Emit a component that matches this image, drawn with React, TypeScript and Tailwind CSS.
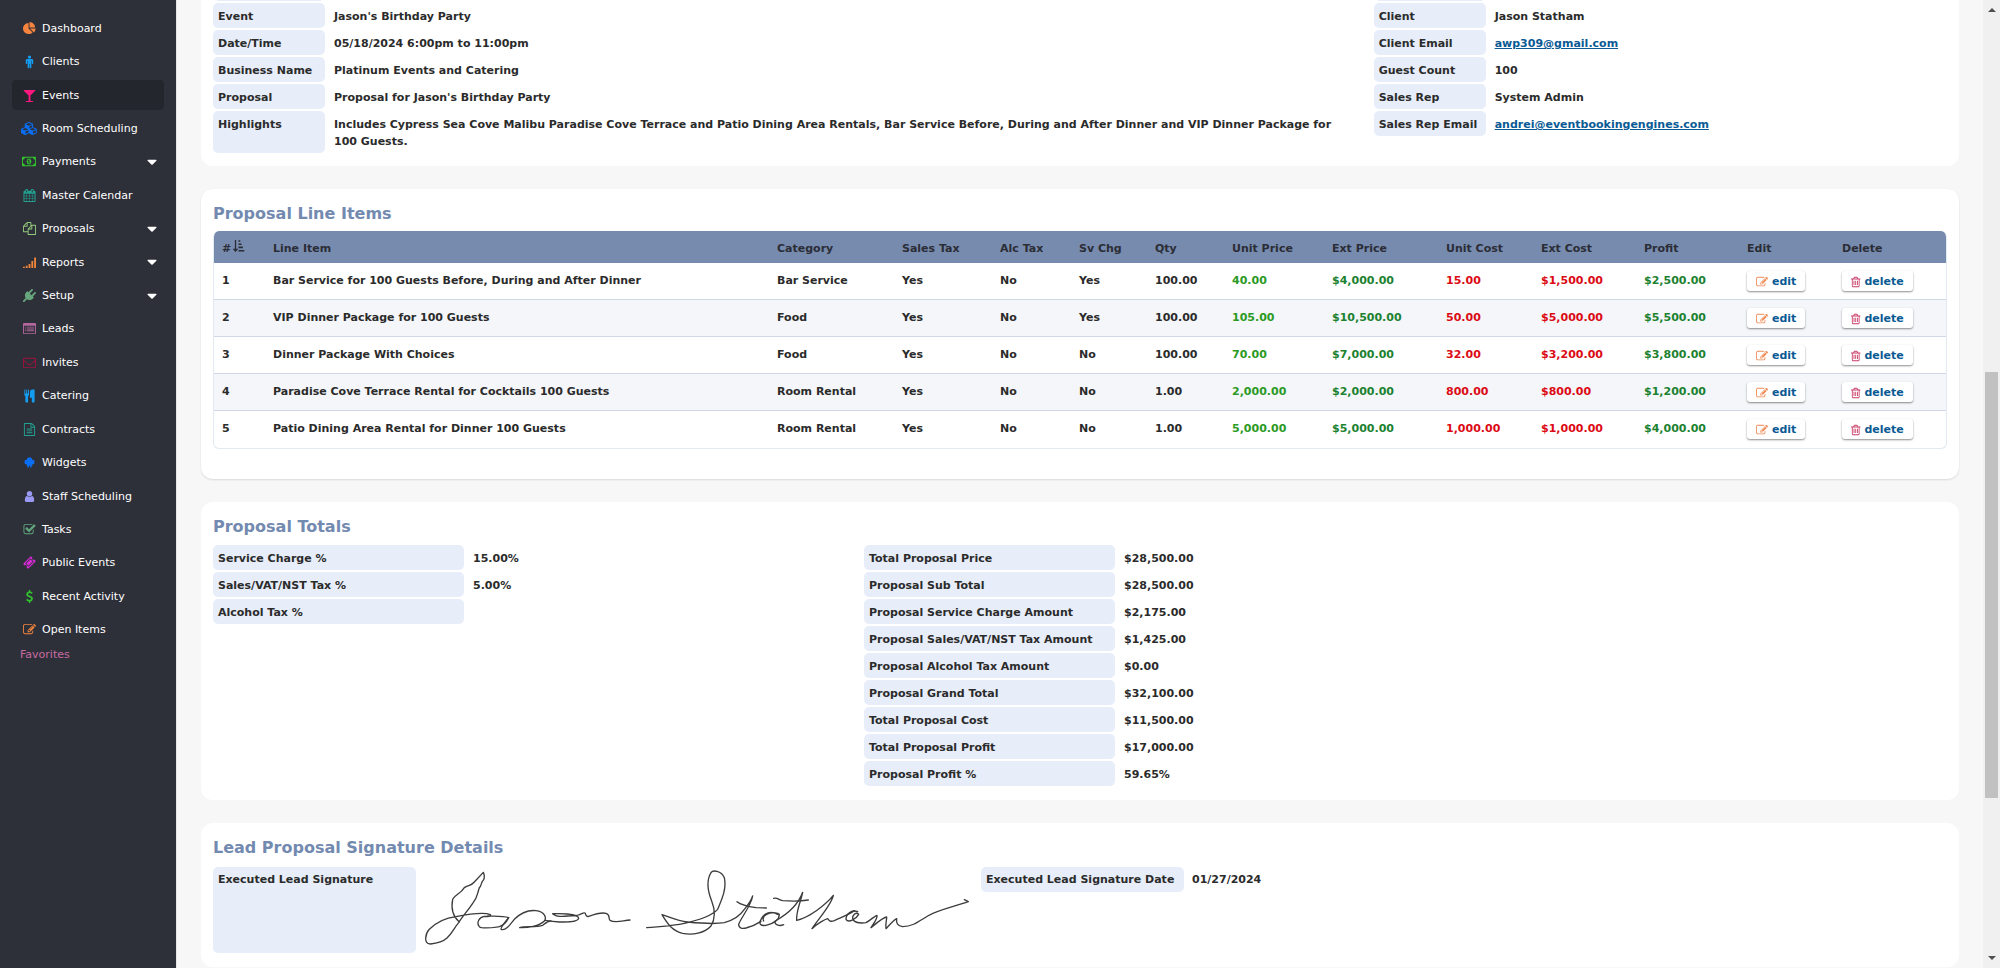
import type { ReactNode } from 'react';

const ICONS = {
  pie: 'M768 890l546 546q-106 108-247.5 168t-298.5 60q-209 0-385.5-103t-279.5-279.5-103-385.5 103-385.5 279.5-279.5 385.5-103v762zm187 6h773q0 157-60 298.5t-168 247.5zm709-128h-768v-768q209 0 385.5 103t279.5 279.5 103 385.5z',
  male: 'M1408 736v416q0 40-28 68t-68 28-68-28-28-68v-352h-64v912q0 46-33 79t-79 33-79-33-33-79v-464h-64v464q0 46-33 79t-79 33-79-33-33-79v-912h-64v352q0 40-28 68t-68 28-68-28-28-68v-416q0-80 56-136t136-56h640q80 0 136 56t56 136zm-288-448q0 93-65.5 158.5t-158.5 65.5-158.5-65.5-65.5-158.5 65.5-158.5 158.5-65.5 158.5 65.5 65.5 158.5z',
  glass: 'M1699 186q0 35-43 78l-632 632v768h320q26 0 45 19t19 45-19 45-45 19h-896q-26 0-45-19t-19-45 19-45 45-19h320v-768l-632-632q-43-43-43-78 0-23 18-36.5t38-17.5 43-4h1408q23 0 43 4t38 17.5 18 36.5z',
  cubes: 'M640 1632l384-192v-314l-384 164v342zm-64-454l404-173-404-173-404 173zm1088 454l384-192v-314l-384 164v342zm-64-454l404-173-404-173-404 173zm-448-293l384-165v-266l-384 164v267zm-64-379l441-189-441-189-441 189zm1088 518v416q0 36-19 67t-52 47l-448 224q-25 14-57 14t-57-14l-448-224q-4-2-7-4-2 2-7 4l-448 224q-25 14-57 14t-57-14l-448-224q-33-16-52-47t-19-67v-416q0-38 21.5-70t56.5-48l434-186v-400q0-38 21.5-70t56.5-48l448-192q23-10 50-10t50 10l448 192q35 16 56.5 48t21.5 70v400l434 186q36 16 57 48t21 70z',
  money: 'M768 1152h384v-96h-128v-448h-114l-148 137 77 80q42-37 55-57h2v288h-128v96zm512-256q0 70-21 142t-59.5 134-101.5 101-138 39-138-39-101.5-101-59.5-134-21-142 21-142 59.5-134 101.5-101 138-39 138 39 101.5 101 59.5 134 21 142zm512 256v-512q-106 0-181-75t-75-181h-1152q0 106-75 181t-181 75v512q106 0 181 75t75 181h1152q0-106 75-181t181-75zm128-832v1152q0 26-19 45t-45 19h-1792q-26 0-45-19t-19-45v-1152q0-26 19-45t45-19h1792q26 0 45 19t19 45z',
  calendar: 'M192 1664h288v-288h-288v288zm352 0h320v-288h-320v288zm-352-352h288v-320h-288v320zm352 0h320v-320h-320v320zm-352-384h288v-288h-288v288zm736 736h320v-288h-320v288zm-384-736h320v-288h-320v288zm768 736h288v-288h-288v288zm-384-352h320v-320h-320v320zm-352-864v-288q0-13-9.5-22.5t-22.5-9.5h-64q-13 0-22.5 9.5t-9.5 22.5v288q0 13 9.5 22.5t22.5 9.5h64q13 0 22.5-9.5t9.5-22.5zm736 864h288v-320h-288v320zm-384-384h320v-288h-320v288zm384 0h288v-288h-288v288zm32-480v-288q0-13-9.5-22.5t-22.5-9.5h-64q-13 0-22.5 9.5t-9.5 22.5v288q0 13 9.5 22.5t22.5 9.5h64q13 0 22.5-9.5t9.5-22.5zm384-64v1280q0 52-38 90t-90 38h-1408q-52 0-90-38t-38-90v-1280q0-52 38-90t90-38h128v-96q0-66 47-113t113-47h64q66 0 113 47t47 113v96h384v-96q0-66 47-113t113-47h64q66 0 113 47t47 113v96h128q52 0 90 38t38 90z',
  files: 'M1696 384q40 0 68 28t28 68v1216q0 40-28 68t-68 28h-960q-40 0-68-28t-28-68v-288h-544q-40 0-68-28t-28-68v-672q0-40 20-88t48-76l408-408q28-28 76-48t88-20h416q40 0 68 28t28 68v328q68-40 128-40h416zm-544 213l-299 299h299v-299zm-640-384l-299 299h299v-299zm196 647l316-316v-416h-384v416q0 40-28 68t-68 28h-416v640h512v-256q0-40 20-88t48-76zm956 804v-1152h-384v416q0 40-28 68t-68 28h-416v640h896z',
  signal: 'M0 1472h256v192h-256zM384 1344h256v320h-256zM768 1088h256v576h-256zM1152 704h256v960h-256zM1536 192h256v1472h-256z',
  plug: 'M1755 453q37 38 37 90.5t-37 90.5l-401 400 150 150-160 160q-163 163-389.5 186.5t-411.5-100.5l-362 362h-181v-181l362-362q-124-185-100.5-411.5t186.5-389.5l160-160 150 150 400-401q38-37 91-37t90 37 37 90.5-37 90.5l-400 401 234 234 401-400q38-37 91-37t90 37z',
  list: 'M160 128h1472q66 0 113 47t47 113v1216q0 66-47 113t-113 47h-1472q-66 0-113-47t-47-113v-1216q0-66 47-113t113-47zM128 512v992q0 32 32 32h1472q32 0 32-32v-992zM256 640h128v128h-128zM512 640h1024v128h-1024zM256 896h128v128h-128zM512 896h1024v128h-1024zM256 1152h128v128h-128zM512 1152h1024v128h-1024z',
  envelope: 'M1664 1504v-768q-32 36-69 66-268 206-426 338-51 43-83 67t-86.5 48.5-102.5 24.5h-2q-48 0-102.5-24.5t-86.5-48.5-83-67q-158-132-426-338-37-30-69-66v768q0 13 9.5 22.5t22.5 9.5h1472q13 0 22.5-9.5t9.5-22.5zm0-1051v-24.5l-.5-13-3-12.5-5.5-9-9-7.5-14-2.5h-1472q-13 0-22.5 9.5t-9.5 22.5q0 168 147 284 193 152 401 317 6 5 35 29.5t46 37.5 44.5 31.5 50.5 27.5 43 9h2q20 0 43-9t50.5-27.5 44.5-31.5 46-37.5 35-29.5q208-165 401-317 54-43 100.5-115.5t46.5-131.5zm128-37v1088q0 66-47 113t-113 47h-1472q-66 0-113-47t-47-113v-1088q0-66 47-113t113-47h1472q66 0 113 47t47 113z',
  cutlery: 'M832 128v640q0 61-35.5 111t-92.5 70v779q0 52-38 90t-90 38h-128q-52 0-90-38t-38-90v-779q-57-20-92.5-70t-35.5-111v-640q0-26 19-45t45-19 45 19 19 45v416q0 26 19 45t45 19 45-19 19-45v-416q0-26 19-45t45-19 45 19 19 45v416q0 26 19 45t45 19 45-19 19-45v-416q0-26 19-45t45-19 45 19 19 45zm768 0v1600q0 52-38 90t-90 38h-128q-52 0-90-38t-38-90v-512h-224q-13 0-22.5-9.5t-9.5-22.5v-800q0-132 94-226t226-94h256q26 0 45 19t19 45z',
  file: 'M1596 380q28 28 48 76t20 88v1152q0 40-28 68t-68 28h-1344q-40 0-68-28t-28-68v-1600q0-40 28-68t68-28h896q40 0 88 20t76 48zm-444-244v376h376q-10-29-22-41l-313-313q-12-12-41-22zm384 1528v-1024h-416q-40 0-68-28t-28-68v-416h-768v1536h1280zm-1024-864q0-14 9-23t23-9h704q14 0 23 9t9 23v64q0 14-9 23t-23 9h-704q-14 0-23-9t-9-23v-64zm736 224q14 0 23 9t9 23v64q0 14-9 23t-23 9h-704q-14 0-23-9t-9-23v-64q0-14 9-23t23-9h704zm0 256q14 0 23 9t9 23v64q0 14-9 23t-23 9h-704q-14 0-23-9t-9-23v-64q0-14 9-23t23-9h704z',
  android: 'M480 560q40-330 416-380q376 50 416 380h120q120 0 140 110v340q-10 100-120 100h-140v130q0 90-90 90h-40v190q-10 90-100 90t-100-90v-190h-172v190q-10 90-100 90t-100-90v-190h-40q-90 0-90-90v-130h-140q-110 0-120-100v-340q20-110 140-110z',
  user: 'M1536 1399q0 109-62.5 187t-150.5 78h-854q-88 0-150.5-78t-62.5-187q0-85 8.5-160.5t31.5-152 58.5-131 94-89 134.5-34.5q131 128 313 128t313-128q76 0 134.5 34.5t94 89 58.5 131 31.5 152 8.5 160.5zm-256-887q0 159-112.5 271.5t-271.5 112.5-271.5-112.5-112.5-271.5 112.5-271.5 271.5-112.5 271.5 112.5 112.5 271.5z',
  check: 'M1472 930v318q0 119-84.5 203.5t-203.5 84.5h-832q-119 0-203.5-84.5t-84.5-203.5v-832q0-119 84.5-203.5t203.5-84.5h832q63 0 117 25 15 7 18 23 3 17-9 29l-49 49q-10 10-23 10-3 0-9-2-23-6-45-6h-832q-66 0-113 47t-47 113v832q0 66 47 113t113 47h832q66 0 113-47t47-113v-254q0-13 9-22l64-64q10-10 23-10 6 0 12 3 20 8 20 29zm231-489l-814 814q-24 24-57 24t-57-24l-430-430q-24-24-24-57t24-57l110-110q24-24 57-24t57 24l263 263 647-647q24-24 57-24t57 24l110 110q24 24 24 57t-24 57z',
  ticket: 'M1024 452l316 316-572 572-316-316zm-211 979l618-618q19-19 19-45t-19-45l-362-362q-18-18-45-18t-45 18l-618 618q-19 19-19 45t19 45l362 362q18 18 45 18t45-18zm889-637l-907 908q-37 37-90.5 37t-90.5-37l-126-126q56-56 56-136t-56-136-136-56-136 56l-125-126q-37-37-37-90.5t37-90.5l907-906q37-37 90.5-37t90.5 37l125 125q-56 56-56 136t56 136 136 56 136-56l126 125q37 37 37 90.5t-37 90.5z',
  dollar: 'M1362 1185q0 153-99.5 263.5t-258.5 136.5v175q0 14-9 23t-23 9h-135q-13 0-22.5-9.5t-9.5-22.5v-175q-66-9-127.5-31t-101.5-44.5-74-48-46.5-37.5-17.5-18q-17-21-2-41l103-135q7-10 23-12 15-2 24 9l2 2q113 99 243 125 37 8 74 8 81 0 142.5-43t61.5-122q0-28-15-53t-33.5-42-58.5-37.5-66-32-80-32.5q-39-16-61.5-25t-61.5-26.5-62.5-31-56.5-35.5-53.5-42.5-43.5-49-35.5-58-21-66.5-8.5-78q0-138 98-242t255-134v-180q0-13 9.5-22.5t22.5-9.5h135q14 0 23 9t9 23v176q57 6 110.5 23t87 33.5 63.5 37.5 39 29 15 14q17 18 5 38l-81 146q-8 15-23 16-14 3-27-7-3-3-14.5-12t-39-26.5-58.5-32-74.5-26-85.5-11.5q-95 0-155 43t-60 111q0 26 8.5 48t29.5 41.5 39.5 33 56 31 60.5 27 70 27.5q53 20 81 31.5t76 35 75.5 42.5 62 50 53 63.5 31.5 76.5 13 94z',
  edit: 'M888 1184l116-116-152-152-116 116v56h96v96h56zm440-720q-16-16-33 1l-350 350q-17 17-1 33t33-1l350-350q17-17 1-33zm80 594v190q0 119-84.5 203.5t-203.5 84.5h-832q-119 0-203.5-84.5t-84.5-203.5v-832q0-119 84.5-203.5t203.5-84.5h832q63 0 117 25 15 7 18 23 3 17-9 29l-49 49q-14 14-32 8-23-6-45-6h-832q-66 0-113 47t-47 113v832q0 66 47 113t113 47h832q66 0 113-47t47-113v-126q0-13 9-22l64-64q15-15 35-7t20 29zm-96-738l288 288-672 672h-288v-288zm444 132l-92 92-288-288 92-92q28-28 68-28t68 28l152 152q28 28 28 68t-28 68z',
  trash: 'M704 736v576q0 14-9 23t-23 9h-64q-14 0-23-9t-9-23v-576q0-14 9-23t23-9h64q14 0 23 9t9 23zm256 0v576q0 14-9 23t-23 9h-64q-14 0-23-9t-9-23v-576q0-14 9-23t23-9h64q14 0 23 9t9 23zm256 0v576q0 14-9 23t-23 9h-64q-14 0-23-9t-9-23v-576q0-14 9-23t23-9h64q14 0 23 9t9 23zm128 724v-948h-896v948q0 22 7 40.5t14.5 27 10.5 8.5h832q3 0 10.5-8.5t14.5-27 7-40.5zm-672-1076h448l-48-117q-7-9-17-11h-317q-10 2-17 11zm928 32v64q0 14-9 23t-23 9h-96v948q0 83-47 143.5t-113 60.5h-832q-66 0-113-58.5t-47-141.5v-952h-96q-14 0-23-9t-9-23v-64q0-14 9-23t23-9h309l70-167q15-37 54-63t79-26h320q40 0 79 26t54 63l70 167h309q14 0 23 9t9 23z',
  caret: 'M1408 704q0 26-19 45l-448 448q-19 19-45 19t-45-19l-448-448q-19-19-19-45t19-45 45-19h896q26 0 45 19t19 45z',
};

type IconName = keyof typeof ICONS;

const BOXES: Partial<Record<IconName, string>> = {
  cubes: '0 0 2304 1792',
  money: '0 0 1920 1792',
  trash: '192 0 1408 1792',
};

function Icon({ name, className }: { name: IconName; className: string }) {
  return (
    <svg viewBox={BOXES[name] ?? '0 0 1792 1792'} className={className} fill="currentColor" fillRule="evenodd" overflow="visible" aria-hidden="true">
      <path d={ICONS[name]} />
    </svg>
  );
}

type NavItem = { label: string; icon: IconName; color: string; active?: boolean; menu?: boolean };

const NAV: NavItem[] = [
  { label: 'Dashboard', icon: 'pie', color: 'text-[#f5843f]' },
  { label: 'Clients', icon: 'male', color: 'text-[#149df0]' },
  { label: 'Events', icon: 'glass', color: 'text-[#fb1680]', active: true },
  { label: 'Room Scheduling', icon: 'cubes', color: 'text-[#0a6ef5]' },
  { label: 'Payments', icon: 'money', color: 'text-[#30c32c]', menu: true },
  { label: 'Master Calendar', icon: 'calendar', color: 'text-[#22a292]' },
  { label: 'Proposals', icon: 'files', color: 'text-[#94c97c]', menu: true },
  { label: 'Reports', icon: 'signal', color: 'text-[#ee833c]', menu: true },
  { label: 'Setup', icon: 'plug', color: 'text-[#67a67c]', menu: true },
  { label: 'Leads', icon: 'list', color: 'text-[#b4669f]' },
  { label: 'Invites', icon: 'envelope', color: 'text-[#a0103c]' },
  { label: 'Catering', icon: 'cutlery', color: 'text-[#149df0]' },
  { label: 'Contracts', icon: 'file', color: 'text-[#22a292]' },
  { label: 'Widgets', icon: 'android', color: 'text-[#0a6ef5]' },
  { label: 'Staff Scheduling', icon: 'user', color: 'text-[#9a9af5]' },
  { label: 'Tasks', icon: 'check', color: 'text-[#5fa57c]' },
  { label: 'Public Events', icon: 'ticket', color: 'text-[#d42bd4]' },
  { label: 'Recent Activity', icon: 'dollar', color: 'text-[#30c32c]' },
  { label: 'Open Items', icon: 'edit', color: 'text-[#ee833c]' },
];

function Sidebar() {
  return (
    <aside className="w-44 shrink-0 bg-[#2e3039] px-3 pt-[11px] text-white">
      <nav>
        <ul className="grid h-[635px] auto-rows-fr">
          {NAV.map((item) => (
            <li key={item.label} className="flex items-center">
              <a
                href="#"
                className={
                  item.active
                    ? 'flex h-[30px] grow items-center rounded bg-[#24262e] pt-px pr-1 pl-2'
                    : 'flex h-[30px] grow items-center rounded pt-px pr-1 pl-2'
                }
              >
                <span className={`flex w-[18px] justify-center ${item.color}`}>
                  <Icon name={item.icon} className="h-[13px] w-auto shrink-0" />
                </span>
                <span className="ml-1 grow">{item.label}</span>
                {item.menu && <Icon name="caret" className="size-4" />}
              </a>
            </li>
          ))}
        </ul>
      </nav>
      <p className="pl-2 leading-[17px] text-[#c76ba3]">Favorites</p>
    </aside>
  );
}

function Card({ title, className, children }: { title?: string; className: string; children: ReactNode }) {
  return (
    <section className={`bg-white px-3 ${className}`}>
      {title && <h2 className="text-base leading-6 font-bold text-[#738ab0]">{title}</h2>}
      {children}
    </section>
  );
}

type Pair = { label: string; value: ReactNode };

function Details({ rows, columns }: { rows: Pair[]; columns: string }) {
  return (
    <dl className={`grid content-start gap-x-2 gap-y-0.5 ${columns}`}>
      {rows.map((row) => (
        <div key={row.label} className="contents">
          <dt className="rounded-[5px] bg-[#e7edf9] px-[5px] pt-[5px] pb-[3px] whitespace-nowrap">{row.label}</dt>
          <dd className="pt-[5px] pr-3 pb-[3px] pl-px">{row.value}</dd>
        </div>
      ))}
    </dl>
  );
}

function Mail({ address }: { address: string }) {
  return (
    <a href={`mailto:${address}`} className="text-[#0a5a94] underline">
      {address}
    </a>
  );
}

const EVENT_ROWS: Pair[] = [
  { label: 'Event', value: "Jason's Birthday Party" },
  { label: 'Date/Time', value: '05/18/2024 6:00pm to 11:00pm' },
  { label: 'Business Name', value: 'Platinum Events and Catering' },
  { label: 'Proposal', value: "Proposal for Jason's Birthday Party" },
  {
    label: 'Highlights',
    value:
      'Includes Cypress Sea Cove Malibu Paradise Cove Terrace and Patio Dining Area Rentals, Bar Service Before, During and After Dinner and VIP Dinner Package for 100 Guests.',
  },
];

const CLIENT_ROWS: Pair[] = [
  { label: 'Client', value: 'Jason Statham' },
  { label: 'Client Email', value: <Mail address="awp309@gmail.com" /> },
  { label: 'Guest Count', value: '100' },
  { label: 'Sales Rep', value: 'System Admin' },
  { label: 'Sales Rep Email', value: <Mail address="andrei@eventbookingengines.com" /> },
];

const RATE_ROWS: Pair[] = [
  { label: 'Service Charge %', value: '15.00%' },
  { label: 'Sales/VAT/NST Tax %', value: '5.00%' },
  { label: 'Alcohol Tax %', value: '' },
];

const TOTAL_ROWS: Pair[] = [
  { label: 'Total Proposal Price', value: '$28,500.00' },
  { label: 'Proposal Sub Total', value: '$28,500.00' },
  { label: 'Proposal Service Charge Amount', value: '$2,175.00' },
  { label: 'Proposal Sales/VAT/NST Tax Amount', value: '$1,425.00' },
  { label: 'Proposal Alcohol Tax Amount', value: '$0.00' },
  { label: 'Proposal Grand Total', value: '$32,100.00' },
  { label: 'Total Proposal Cost', value: '$11,500.00' },
  { label: 'Total Proposal Profit', value: '$17,000.00' },
  { label: 'Proposal Profit %', value: '59.65%' },
];

const COLUMNS = [
  { name: '#', width: 'w-[51px]', tone: '' },
  { name: 'Line Item', width: '', tone: '' },
  { name: 'Category', width: 'w-[125px]', tone: '' },
  { name: 'Sales Tax', width: 'w-[98px]', tone: '' },
  { name: 'Alc Tax', width: 'w-[79px]', tone: '' },
  { name: 'Sv Chg', width: 'w-[76px]', tone: '' },
  { name: 'Qty', width: 'w-[77px]', tone: '' },
  { name: 'Unit Price', width: 'w-[100px]', tone: 'text-[#2b9a24]' },
  { name: 'Ext Price', width: 'w-[114px]', tone: 'text-[#1c8230]' },
  { name: 'Unit Cost', width: 'w-[95px]', tone: 'text-[#dc0a14]' },
  { name: 'Ext Cost', width: 'w-[103px]', tone: 'text-[#dc0a14]' },
  { name: 'Profit', width: 'w-[103px]', tone: 'text-[#1c8230]' },
  { name: 'Edit', width: 'w-[95px]', tone: '' },
  { name: 'Delete', width: 'w-[112px]', tone: '' },
];

const LINE_ITEMS = [
  ['1', 'Bar Service for 100 Guests Before, During and After Dinner', 'Bar Service', 'Yes', 'No', 'Yes', '100.00', '40.00', '$4,000.00', '15.00', '$1,500.00', '$2,500.00'],
  ['2', 'VIP Dinner Package for 100 Guests', 'Food', 'Yes', 'No', 'Yes', '100.00', '105.00', '$10,500.00', '50.00', '$5,000.00', '$5,500.00'],
  ['3', 'Dinner Package With Choices', 'Food', 'Yes', 'No', 'No', '100.00', '70.00', '$7,000.00', '32.00', '$3,200.00', '$3,800.00'],
  ['4', 'Paradise Cove Terrace Rental for Cocktails 100 Guests', 'Room Rental', 'Yes', 'No', 'No', '1.00', '2,000.00', '$2,000.00', '800.00', '$800.00', '$1,200.00'],
  ['5', 'Patio Dining Area Rental for Dinner 100 Guests', 'Room Rental', 'Yes', 'No', 'No', '1.00', '5,000.00', '$5,000.00', '1,000.00', '$1,000.00', '$4,000.00'],
];

function SortIcon() {
  return (
    <svg viewBox="0 0 12 12" className="mb-1 h-3 w-3" fill="none" stroke="currentColor" strokeWidth="1.3" aria-hidden="true">
      <path d="M2.5 0v11M0.5 8.8l2 2.2 2-2.2" />
      <path d="M5.5 1h1.8M5.5 4.2h3M5.5 7.4h4.4M5.5 10.8h5.8" strokeWidth="1.6" />
    </svg>
  );
}

function ActionButton({ icon, color, label }: { icon: IconName; color: string; label: string }) {
  return (
    <button
      type="button"
      className="flex h-5 items-center gap-1 rounded-[3px] bg-white px-[9px] pt-px font-bold text-[#0a5a94] shadow-[0_1px_2px_rgba(0,0,0,0.45)]"
    >
      <Icon name={icon} className={`h-3 w-auto ${color}`} />
      {label}
    </button>
  );
}

function LineItems() {
  return (
    <div className="mt-[5px] overflow-hidden rounded-md border border-t-0 border-[#e1e9f3]">
      <table className="w-full table-fixed border-separate border-spacing-0 text-left">
        <thead>
          <tr className="h-8 bg-[#778bae] text-[#2b2d36]">
            {COLUMNS.map((column) => (
              <th key={column.name} className={`pt-0.5 pl-2 font-bold ${column.width}`}>
                {column.name === '#' ? (
                  <span className="flex items-center gap-0.5">
                    # <SortIcon />
                  </span>
                ) : (
                  column.name
                )}
              </th>
            ))}
          </tr>
        </thead>
        <tbody className="[&>tr:last-child>td]:border-b-0">
          {LINE_ITEMS.map((cells) => (
            <tr key={cells[0]} className="h-[37px] even:bg-[#f4f6fa]">
              {cells.map((cell, index) => (
                <td key={index} className={`border-b border-b-[#cfd8e6] pt-[9px] pl-2 align-top ${COLUMNS[index].tone}`}>
                  {cell}
                </td>
              ))}
              <td className="border-b border-b-[#cfd8e6] pt-2 pl-2 align-top">
                <ActionButton icon="edit" color="text-[#f08a55]" label="edit" />
              </td>
              <td className="border-b border-b-[#cfd8e6] pt-2 pl-2 align-top">
                <ActionButton icon="trash" color="text-[#c93a66]" label="delete" />
              </td>
            </tr>
          ))}
        </tbody>
      </table>
    </div>
  );
}

function Signature() {
  return (
    <svg
      viewBox="9 12 1629 231"
      className="h-[77px] w-[543px]"
      fill="none"
      stroke="#3c3c3c"
      strokeWidth="4"
      strokeLinecap="round"
      strokeLinejoin="round"
      overflow="visible"
      role="img"
      aria-label="Jason Statham"
    >
      <path d="M115 168C100 155 88 135 95 100C102 85 118 85 130 65C145 55 150 60 160 48L187 19C192 30 190 42 185 45C180 50 182 60 175 65C168 85 170 95 155 112C140 135 125 150 113 170C100 185 95 200 78 216C65 228 45 232 28 234C5 234 15 200 25 190C50 165 80 155 105 152C140 145 190 138 208 146C212 152 200 152 190 151C175 153 165 170 175 182C185 190 215 185 235 182C250 178 258 165 263 155C245 148 215 151 200 150" />
      <path d="M263 155C250 170 240 182 240 190C255 195 268 175 280 160C300 140 325 132 345 134C370 137 378 155 370 165C355 180 320 186 296 185C315 180 345 185 365 178C375 170 380 165 390 165" />
      <path d="M372 163C385 165 400 167 415 168C440 168 470 168 473 157C472 145 430 142 395 143C405 152 425 152 440 150C455 149 465 151 472 147C485 142 490 138 493 142C495 150 498 153 503 151C520 145 540 138 555 142C570 147 560 155 567 163C580 172 600 165 627 162" />
      <path d="M677 185C720 181 755 180 790 172C830 163 870 152 890 130C900 105 918 70 910 35C900 12 875 12 870 20C855 45 862 80 872 105C880 125 885 155 870 180C850 202 815 208 785 202C755 195 740 175 723 146C745 152 765 165 800 168C840 172 880 175 910 170C945 160 960 145 970 130C980 118 990 105 995 90C990 120 960 155 953 175C953 188 965 188 975 186C990 182 1005 176 1020 166" />
      <path d="M948 107C962 118 985 122 1005 125L1036 126" />
      <path d="M1070 145C1050 133 1030 140 1020 160C1012 175 1020 180 1035 178C1060 172 1075 160 1075 145L1070 142C1045 135 1020 150 1028 165" />
      <path d="M1088 176C1075 182 1058 176 1063 165C1090 150 1130 120 1145 79C1140 105 1125 135 1127 163C1165 155 1215 115 1237 88C1232 115 1195 155 1173 188C1190 172 1212 160 1220 158C1225 165 1228 168 1240 164C1258 155 1280 148 1300 134" />
      <path d="M1310 137C1290 130 1275 145 1275 160C1282 172 1305 160 1313 145C1305 135 1290 150 1297 162C1305 172 1320 172 1335 170C1350 162 1360 150 1368 148C1370 158 1358 172 1350 185C1368 170 1385 155 1397 153C1398 160 1392 175 1395 188C1405 178 1415 165 1427 158C1425 172 1430 180 1445 182C1475 182 1495 165 1520 150C1550 132 1600 122 1642 107L1630 101" />
      <path d="M1058 97C1070 94 1072 102 1085 104C1110 106 1140 106 1162 102" />
    </svg>
  );
}

function Scrollbar() {
  return (
    <div className="flex w-[17px] shrink-0 flex-col items-center bg-[#f0f0f0] py-2 text-[#505050]" aria-hidden="true">
      <svg viewBox="0 0 8 4" className="h-1 w-2" fill="currentColor">
        <path d="M0 4L4 0L8 4Z" />
      </svg>
      <div className="my-[5px] flex w-full grow flex-col items-center">
        <div className="grow-[355]" />
        <div className="w-[13px] grow-[426] bg-[#c1c1c1]" />
        <div className="grow-[153]" />
      </div>
      <svg viewBox="0 0 8 4" className="h-1 w-2" fill="currentColor">
        <path d="M0 0L4 4L8 0Z" />
      </svg>
    </div>
  );
}

export default function App() {
  return (
    <div className="flex h-screen overflow-hidden bg-[#f7f7f7] font-['DejaVu_Sans',Verdana,sans-serif] text-[11px] leading-[17px]">
      <Sidebar />
      <main className="flex min-w-0 grow flex-col gap-[23px] overflow-hidden border-l border-[#e4e4e4] px-6 font-bold text-[#2b2b2b] *:shrink-0">
        <Card className="rounded-b-xl pb-[13px]">
          <div className="grid grid-cols-[1148fr_573fr] gap-x-3">
            <div className="mb-0.5 h-px w-28 px-1">
              <div className="h-px bg-[#e7edf9]" />
            </div>
            <div className="mb-0.5 h-px w-28 px-1">
              <div className="h-px bg-[#e7edf9]" />
            </div>
            <Details rows={EVENT_ROWS} columns="grid-cols-[112px_1fr]" />
            <Details rows={CLIENT_ROWS} columns="grid-cols-[112px_1fr]" />
          </div>
        </Card>

        <Card title="Proposal Line Items" className="rounded-xl pt-[13px] pb-[30px] shadow-[0_1px_2px_rgba(0,0,0,0.12)]">
          <LineItems />
        </Card>

        <Card title="Proposal Totals" className="rounded-xl pt-[13px] pb-3.5">
          <div className="mt-1.5 grid grid-cols-[651fr_1083fr]">
            <Details rows={RATE_ROWS} columns="grid-cols-[251px_1fr]" />
            <Details rows={TOTAL_ROWS} columns="grid-cols-[251px_1fr]" />
          </div>
        </Card>

        <Card title="Lead Proposal Signature Details" className="rounded-xl pt-[13px] pb-3.5">
          <dl className="mt-[7px] flex gap-2">
            <dt className="w-[203px] rounded-[5px] bg-[#e7edf9] px-[5px] py-1">Executed Lead Signature</dt>
            <dd className="pt-[3px] pb-1.5">
              <Signature />
            </dd>
            <dt className="ml-1.5 w-[203px] self-start rounded-[5px] bg-[#e7edf9] px-[5px] py-1">Executed Lead Signature Date</dt>
            <dd className="py-1">01/27/2024</dd>
          </dl>
        </Card>
      </main>
      <Scrollbar />
    </div>
  );
}
